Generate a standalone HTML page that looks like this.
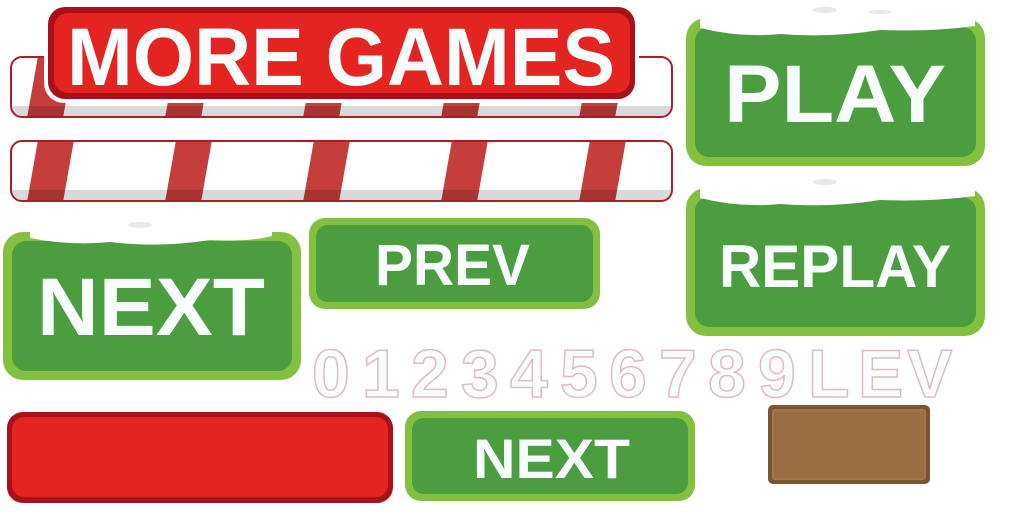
<!DOCTYPE html>
<html><head><meta charset="utf-8"><style>
html,body{margin:0;padding:0;background:#fff;width:1024px;height:512px;overflow:hidden}
svg{display:block}
text{font-family:"Liberation Sans",sans-serif;font-weight:bold}
</style></head><body>
<svg width="1024" height="512" viewBox="0 0 1024 512">
<defs>
<clipPath id="b1"><rect x="11" y="57" width="661" height="60" rx="11"/></clipPath>
<clipPath id="b2"><rect x="11" y="141" width="661" height="60" rx="11"/></clipPath>
<g id="stripes">
<polygon points="38,0 74,0 63,62 27,62" fill="#c43e3c"/>
<polygon points="176,0 212,0 201,62 165,62" fill="#c43e3c"/>
<polygon points="314,0 350,0 339,62 303,62" fill="#c43e3c"/>
<polygon points="452,0 488,0 477,62 441,62" fill="#c43e3c"/>
<polygon points="590,0 626,0 615,62 579,62" fill="#c43e3c"/>
<rect x="0" y="50" width="700" height="12" fill="#000" opacity="0.15"/>
</g>
</defs>
<g clip-path="url(#b1)"><rect x="0" y="0" width="700" height="200" fill="#fff"/><use href="#stripes" x="0" y="56"/></g>
<rect x="11" y="57" width="661" height="60" rx="11" fill="none" stroke="#a82025" stroke-width="2"/>
<g clip-path="url(#b2)"><rect x="0" y="100" width="700" height="200" fill="#fff"/><use href="#stripes" x="0" y="140"/></g>
<rect x="11" y="141" width="661" height="60" rx="11" fill="none" stroke="#a82025" stroke-width="2"/>
<rect x="44" y="4" width="595" height="99" rx="20" fill="#fff"/>
<rect x="48" y="7" width="587" height="92" rx="17" fill="#a8111c"/>
<rect x="54" y="13" width="576" height="80" rx="14" fill="#e32420"/>
<text x="67" y="85" font-size="82" fill="#f7fdfd" textLength="548" lengthAdjust="spacingAndGlyphs">MORE GAMES</text>

<rect x="686" y="18" width="299" height="148" rx="20" fill="#84c040"/>
<rect x="695" y="27" width="281" height="130" rx="14" fill="#4c9c40"/>
<path d="M700 18 L975 18 L975 26 Q930 32 880 30 Q830 38 780 34 Q740 38 700 28Z" fill="#fff"/>
<ellipse cx="825" cy="10" rx="12" ry="3" fill="#e8e8e8"/><ellipse cx="880" cy="12" rx="12" ry="2" fill="#e8e8e8"/>
<text x="724" y="122" font-size="82" fill="#f7fdfd" textLength="222" lengthAdjust="spacingAndGlyphs">PLAY</text>

<rect x="686" y="188" width="299" height="148" rx="20" fill="#84c040"/>
<rect x="695" y="197" width="281" height="130" rx="14" fill="#4c9c40"/>
<path d="M700 188 L975 188 L975 196 Q930 202 880 200 Q830 208 780 204 Q740 208 700 198Z" fill="#fff"/>
<ellipse cx="825" cy="182" rx="12" ry="3" fill="#e8e8e8"/>
<text x="719" y="287" font-size="60" fill="#f7fdfd" textLength="232" lengthAdjust="spacingAndGlyphs">REPLAY</text>

<rect x="3" y="232" width="298" height="148" rx="20" fill="#84c040"/>
<rect x="12" y="241" width="280" height="130" rx="14" fill="#4c9c40"/>
<path d="M30 232 L272 232 L272 236 Q250 242 210 240 Q160 248 110 242 Q70 246 30 238Z" fill="#fff"/>
<ellipse cx="140" cy="225" rx="12" ry="3" fill="#e8e8e8"/>
<text x="37" y="335" font-size="82" fill="#f7fdfd" textLength="228" lengthAdjust="spacingAndGlyphs">NEXT</text>

<rect x="309" y="218" width="291" height="91" rx="16" fill="#84c040"/>
<rect x="316" y="225" width="277" height="77" rx="12" fill="#4c9c40"/>
<text x="375" y="285" font-size="58" fill="#f7fdfd" textLength="155" lengthAdjust="spacingAndGlyphs">PREV</text>

<rect x="405" y="411" width="290" height="90" rx="16" fill="#84c040"/>
<rect x="412" y="418" width="276" height="76" rx="12" fill="#4c9c40"/>
<text x="473" y="478" font-size="56" fill="#f7fdfd" textLength="157" lengthAdjust="spacingAndGlyphs">NEXT</text>
<rect x="7" y="412" width="386" height="91" rx="16" fill="#a8111c"/>
<rect x="12" y="417" width="376" height="80" rx="12" fill="#e32420"/>
<rect x="768" y="405" width="162" height="79" rx="5" fill="#7a5535"/>
<rect x="772" y="409" width="154" height="71" rx="3" fill="#a87644"/>
<rect x="774" y="411" width="150" height="67" rx="2" fill="#9a6e42"/>
<text y="397" font-size="68" fill="#f7fcfc" stroke="#e2bcbc" stroke-width="1.5" x="312 362 411 461 510 560 609 659 708 758 808 858 907">0123456789LEV</text>
</svg>
</body></html>
